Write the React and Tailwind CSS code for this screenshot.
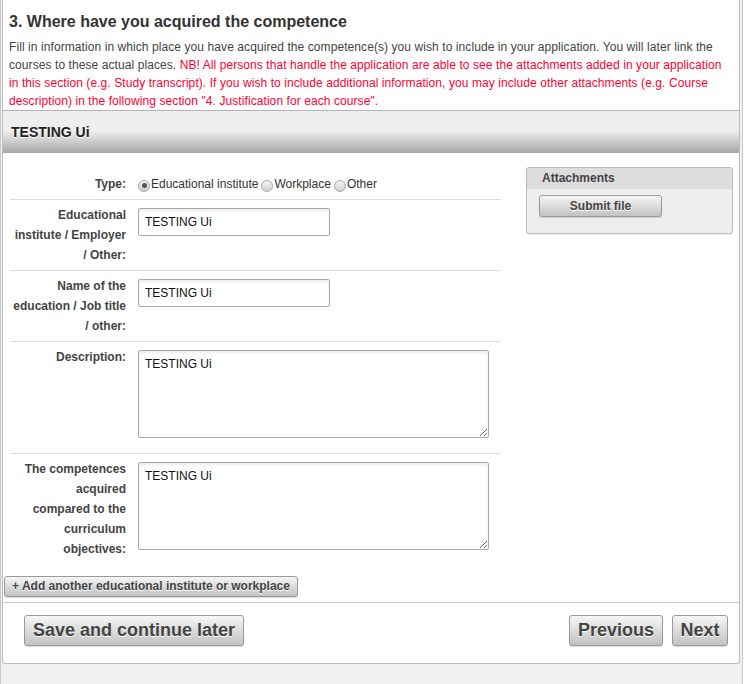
import React from "react";

const btn =
  "border border-[#9a9a9a] rounded-[3px] bg-[linear-gradient(to_bottom,#f6f6f6,#c2c2c2)] text-[#444] font-bold [text-shadow:0_1px_0_#fff] shadow-[0_1px_1px_rgba(0,0,0,0.15)]";

const Radio = ({ checked, label }) => (
  <span className="inline-flex items-center">
    <span className="w-[12px] h-[12px] mt-[3px] rounded-full border border-[#a8a8a8] bg-[linear-gradient(to_bottom,#f4f4f4,#d0d0d0)] flex items-center justify-center">
      {checked && <span className="w-[5px] h-[5px] rounded-full bg-[#555]" />}
    </span>
    <span className="ml-[1px] mr-[3px]">{label}</span>
  </span>
);

const Row = ({ label, children, last }) => (
  <div className={"flex pt-[5px] pb-[5px] " + (last ? "" : "border-b border-[#dcdcdc]")}>
    <div className="w-[116px] shrink-0 text-right font-bold text-[#444] leading-[20px]">{label}</div>
    <div className="ml-[12px] flex-1">{children}</div>
  </div>
);

const TextInput = () => (
  <input
    readOnly
    defaultValue="TESTING Ui"
    className="block mt-[3px] w-[192px] h-[28px] px-[6px] border border-[#a9a9a9] rounded-[2px] bg-white text-[12px] text-[#111] shadow-[inset_0_2px_3px_rgba(0,0,0,0.08)] outline-none"
  />
);

const Area = ({ mb }) => (
  <textarea
    readOnly
    defaultValue="TESTING Ui"
    className={"block mt-[3px] w-[351px] h-[88px] px-[6px] py-[6px] border border-[#a9a9a9] rounded-[2px] bg-white text-[12px] leading-[15px] text-[#111] shadow-[inset_0_2px_3px_rgba(0,0,0,0.08)] outline-none resize-y " + mb}
  />
);

export default function App() {
  return (
    <div className="w-[745px] h-[684px] overflow-hidden bg-white font-['Liberation_Sans',Arial,sans-serif] text-[12px] text-[#444]">
      <div className="w-[743px] h-full border-x border-[#c8c8c8] bg-[#f0f0f0]">
        <div className="ml-[1px] w-[738px] bg-white border-x border-b border-[#bdbdbd] rounded-b-[3px]">
          <div className="pl-[6px] pr-[9px] pt-[12px]">
            <h1 className="text-[16px] leading-[20px] font-bold text-[#333]">
              3. Where have you acquired the competence
            </h1>
            <p className="mt-[6px] leading-[18px] tracking-[0.08px] text-[#444]">
              Fill in information in which place you have acquired the competence(s) you wish to include in your application. You will later link the courses to these actual places.{" "}
              <span className="text-[#ff0033]">
                NB! All persons that handle the application are able to see the attachments added in your application in this section (e.g. Study transcript). If you wish to include additional information, you may include other attachments (e.g. Course description) in the following section "4. Justification for each course".
              </span>
            </p>
          </div>

          <div className="border-t border-[#b5b5b5] h-[43px] bg-[linear-gradient(to_bottom,#eeeeee_48%,#a7a7a7)] flex items-center pl-[8px]">
            <span className="text-[14px] font-bold text-[#222] [text-shadow:0_1px_0_#fff] mt-[1px]">TESTING Ui</span>
          </div>

          <div className="flex pt-[14px] pl-[7px]">
            <div className="w-[491px] pt-[2px]">
              <Row label="Type:">
                <div className="flex items-center leading-[20px] text-[#333]">
                  <Radio checked label="Educational institute" />
                  <Radio label="Workplace" />
                  <Radio label="Other" />
                </div>
              </Row>
              <Row label={<>Educational<br />institute / Employer<br />/ Other:</>}>
                <TextInput />
              </Row>
              <Row label={<>Name of the<br />education / Job title<br />/ other:</>}>
                <TextInput />
              </Row>
              <Row label="Description:">
                <Area mb="mb-[10px]" />
              </Row>
              <Row last label={<>The competences<br />acquired<br />compared to the<br />curriculum<br />objectives:</>}>
                <Area mb="" />
              </Row>
            </div>

            <div className="ml-[25px] w-[207px] h-[67px] border border-[#bbb] rounded-[3px] bg-[#eeeeee] shadow-[0_1px_1px_rgba(0,0,0,0.08)]">
              <div className="h-[21px] bg-[#dddddd] rounded-t-[3px] pl-[15px] font-bold text-[#444] leading-[21px]">
                Attachments
              </div>
              <button className={btn + " ml-[12px] mt-[6px] w-[123px] h-[22px] text-[12px]"}>Submit file</button>
            </div>
          </div>

          <div className="pl-[1px] pt-[12px] pb-[5px] border-b border-[#c8c8c8]">
            <button className={btn + " h-[21px] px-[7px] text-[12px] leading-[19px]"}>
              + Add another educational institute or workplace
            </button>
          </div>

          <div className="flex items-center justify-between pl-[21px] pr-[11px] pt-[12px] pb-[17px]">
            <button className={btn + " h-[31px] w-[220px] text-[18px]"}>Save and continue later</button>
            <div className="flex gap-[9px]">
              <button className={btn + " h-[31px] w-[94px] text-[18px]"}>Previous</button>
              <button className={btn + " h-[31px] w-[56px] text-[18px]"}>Next</button>
            </div>
          </div>
        </div>
      </div>
    </div>
  );
}
